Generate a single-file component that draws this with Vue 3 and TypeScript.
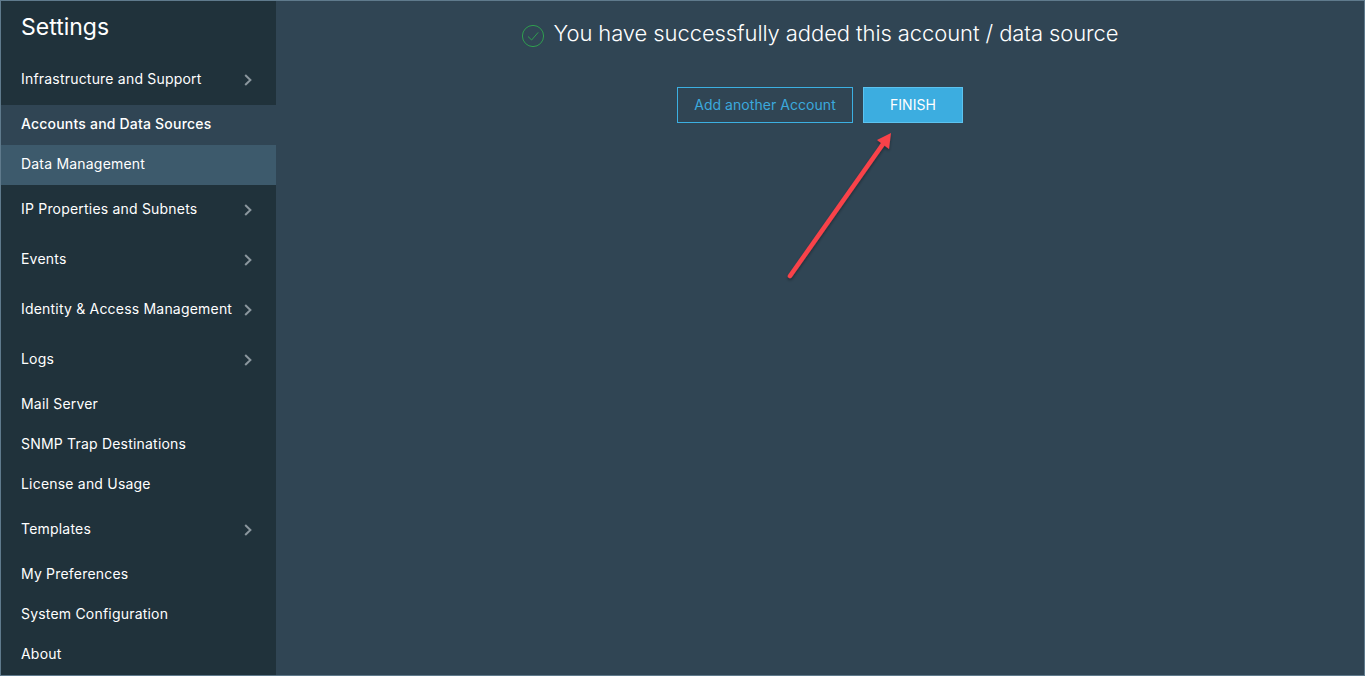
<script setup lang="ts">
interface NavItem {
  label: string
  chevron?: boolean
  state?: string
}
const items: NavItem[] = [
  { label: 'Infrastructure and Support', chevron: true },
  { label: 'Accounts and Data Sources', state: 'selected' },
  { label: 'Data Management', state: 'hover' },
  { label: 'IP Properties and Subnets', chevron: true },
  { label: 'Events', chevron: true },
  { label: 'Identity & Access Management', chevron: true },
  { label: 'Logs', chevron: true },
  { label: 'Mail Server' },
  { label: 'SNMP Trap Destinations' },
  { label: 'License and Usage' },
  { label: 'Templates', chevron: true },
  { label: 'My Preferences' },
  { label: 'System Configuration' },
  { label: 'About' },
]
</script>

<template>
  <div class="frame">
    <aside class="sidebar">
      <h1 class="title">Settings</h1>
      <nav>
        <div
          v-for="item in items"
          :key="item.label"
          class="row"
          :class="[item.state, { tall: item.chevron }]"
        >
          <span class="label">{{ item.label }}</span>
          <svg v-if="item.chevron" class="chev" width="8" height="12" viewBox="0 0 8 12">
            <path d="M1.2 1 L6.4 6 L1.2 11" fill="none" stroke="#8b979e" stroke-width="2" />
          </svg>
        </div>
      </nav>
    </aside>
    <main class="content">
      <div class="message">
        <svg class="ok" width="24" height="24" viewBox="0 0 24 24">
          <circle cx="12" cy="12" r="10.6" fill="none" stroke="#2f9e4f" stroke-width="1" />
          <path d="M7 12.5 L10.6 16 L17.2 8.4" fill="none" stroke="#2f9e4f" stroke-width="1" />
        </svg>
        <span>You have successfully added this account / data source</span>
      </div>
      <div class="actions">
        <button class="btn outline">Add another Account</button>
        <button class="btn solid">FINISH</button>
      </div>
      <svg class="arrow" width="120" height="160" viewBox="0 0 120 160">
        <defs>
          <filter id="sh" x="-20%" y="-20%" width="140%" height="140%">
            <feDropShadow dx="0" dy="2" stdDeviation="1.5" flood-color="#000" flood-opacity="0.35" />
          </filter>
        </defs>
        <g filter="url(#sh)">
          <path d="M10 146 L103 14" stroke="#f9424a" stroke-width="4.5" stroke-linecap="round" fill="none" />
          <path d="M111 3 L109 19 L97 10 Z" fill="#f9424a" />
        </g>
      </svg>
    </main>
  </div>
</template>

<style>
html, body { margin: 0; background: #2f4554; }
</style>

<style scoped>
.frame {
  box-sizing: border-box;
  width: 1365px;
  height: 676px;
  display: flex;
  border: 1px solid #5f7a8c;
  background: #304554;
  overflow: hidden;
  font-family: "Inter", "Noto Sans", sans-serif;
  color: #fff;
}
.sidebar {
  flex: 0 0 275px;
  background: #20323b;
}
.title {
  margin: 0;
  height: 54px;
  padding: 12px 0 0 20px;
  box-sizing: border-box;
  font-size: 23px;
  font-weight: 400;
  line-height: 28px;
}
.row {
  height: 40px;
  display: flex;
  align-items: center;
  justify-content: space-between;
  padding: 0 24px 0 20px;
  font-size: 14px;
  letter-spacing: 0.2px;
}
.label { margin-top: -4px; }
.row.tall { height: 50px; }
.row.selected { background: #304554; font-weight: 500; }
.row.hover { background: #3d5a6c; }
.chev { margin-top: 0; }
.content {
  flex: 1;
  position: relative;
  display: flex;
  flex-direction: column;
  align-items: center;
}
.message {
  display: flex;
  align-items: center;
  gap: 9px;
  margin-top: 18px;
  margin-left: -1px;
  height: 28px;
  font-size: 22px;
  font-weight: 300;
  letter-spacing: -0.09px;
}
.ok { margin-top: 5px; }
.actions {
  display: flex;
  gap: 10px;
  margin-top: 40px;
}
.btn {
  height: 36px;
  font-family: inherit;
  font-size: 14px;
  line-height: 32px;
  box-sizing: border-box;
  border: 1px solid #3cb0e2;
  letter-spacing: 0.05px;
  padding: 0;
}
.outline {
  width: 176px;
  background: transparent;
  color: #3ba9dd;
}
.solid {
  width: 100px;
  background: #3cade0;
  border-color: #5cc3ef;
  color: #fff;
}
.arrow {
  position: absolute;
  left: 504px;
  top: 129px;
  overflow: visible;
}
</style>
